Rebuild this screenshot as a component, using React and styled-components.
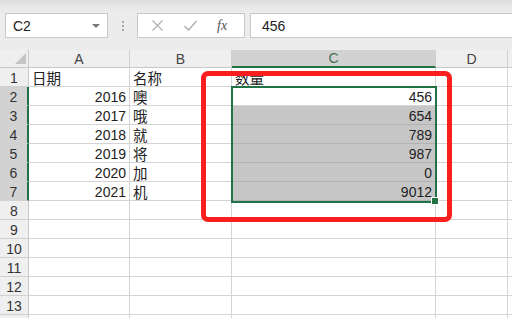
import styled, { createGlobalStyle } from 'styled-components';

const GlobalStyle = createGlobalStyle`
  html, body {
    margin: 0;
    padding: 0;
    background: #fff;
  }
  body {
    font-family: "Liberation Sans", "Noto Sans CJK SC", sans-serif;
    overflow: hidden;
  }
`;

const Page = styled.div`
  width: 512px;
  height: 318px;
  overflow: hidden;
  display: flex;
  flex-direction: column;
`;

const Toolbar = styled.div`
  height: 50px;
  flex-shrink: 0;
  box-sizing: border-box;
  padding: 13px 0 12px 5px;
  display: flex;
  background: linear-gradient(#dcdcdc 0px, #e9e9e9 8px, #ececec 14px);
`;

const NameBox = styled.div`
  width: 103px;
  box-sizing: border-box;
  background: #fff;
  border: 1px solid #c8c8c8;
  display: flex;
  align-items: center;
  justify-content: space-between;
  padding: 0 7px 0 7px;
  font-size: 14px;
  color: #222;
`;

const Arrow = styled.span`
  width: 0;
  height: 0;
  border-left: 4px solid transparent;
  border-right: 4px solid transparent;
  border-top: 4px solid #777;
`;

const Splitter = styled.div`
  width: 29px;
  display: flex;
  flex-direction: column;
  align-items: center;
  justify-content: center;
  gap: 2px;
  span {
    width: 2px;
    height: 2px;
    background: #a8a8a8;
  }
`;

const FxGroup = styled.div`
  width: 108px;
  box-sizing: border-box;
  background: #fff;
  border: 1px solid #c8c8c8;
  display: flex;
  align-items: center;
  padding-left: 13px;
  gap: 19px;
`;

const FxText = styled.span`
  font-family: "Liberation Serif", "DejaVu Serif", serif;
  font-style: italic;
  font-size: 14px;
  color: #555;
  margin-left: 0px;
`;

const FormulaInput = styled.div`
  flex: 1;
  margin-left: 5px;
  box-sizing: border-box;
  background: #fff;
  border: 1px solid #c8c8c8;
  border-right: none;
  display: flex;
  align-items: center;
  padding-left: 11px;
  font-size: 14px;
  color: #222;
`;

const Sheet = styled.div`
  position: relative;
  flex-shrink: 0;
  display: grid;
  grid-template-columns: 29px 101px 102px 204px 72px 40px;
  grid-template-rows: 18px repeat(14, 19px);
  font-size: 14px;
`;

const Corner = styled.div`
  background: #efefef;
  border-right: 1px solid #c8c8c8;
  border-bottom: 1px solid #c8c8c8;
  box-sizing: border-box;
  display: flex;
  align-items: flex-end;
  justify-content: flex-end;
  padding: 0 2px 3px 0;
`;

const ColHead = styled.div`
  box-sizing: border-box;
  background: ${(p) => (p.active ? '#d2d2d2' : '#efefef')};
  border-right: 1px solid #cfcfcf;
  border-bottom: ${(p) => (p.active ? '2px solid #217346' : '1px solid #c8c8c8')};
  color: ${(p) => (p.active ? '#3f6f54' : '#444')};
  display: flex;
  align-items: center;
  justify-content: center;
  font-size: 14px;
`;

const RowHead = styled.div`
  box-sizing: border-box;
  background: ${(p) => (p.active ? '#d2d2d2' : '#efefef')};
  border-bottom: 1px solid #d0d0d0;
  border-right: ${(p) => (p.active ? '2px solid #217346' : '1px solid #c8c8c8')};
  color: #333;
  display: flex;
  align-items: center;
  justify-content: center;
  padding-top: 1px;
`;

const Cell = styled.div`
  box-sizing: border-box;
  background: ${(p) => (p.selected ? '#c6c6c6' : '#fff')};
  border-right: 1px solid #d4d4d4;
  border-bottom: 1px solid ${(p) => (p.selected ? '#b2b2b2' : '#d4d4d4')};
  color: #222;
  display: flex;
  align-items: center;
  justify-content: ${(p) => (p.num ? 'flex-end' : 'flex-start')};
  padding: 1px 3px 0 3px;
  white-space: nowrap;
  overflow: hidden;
  font-family: ${(p) =>
    p.num ? '"Liberation Sans", sans-serif' : '"Noto Sans CJK SC", sans-serif'};
  font-size: ${(p) => (p.num ? '14px' : '14.5px')};
`;

const Selection = styled.div`
  position: absolute;
  left: 231px;
  top: 36px;
  width: 206px;
  height: 117px;
  box-sizing: border-box;
  border: 2px solid #217346;
  pointer-events: none;
`;

const Handle = styled.div`
  position: absolute;
  right: -4px;
  bottom: -4px;
  width: 6px;
  height: 6px;
  background: #217346;
  border: 1px solid #fff;
`;

const RedBox = styled.div`
  position: absolute;
  left: 201px;
  top: 21px;
  width: 251px;
  height: 151px;
  box-sizing: border-box;
  border: 5px solid #fa1e1e;
  border-radius: 7px;
  pointer-events: none;
`;

const rows = [
  ['日期', '名称', '数量'],
  [2016, '噢', 456],
  [2017, '哦', 654],
  [2018, '就', 789],
  [2019, '将', 987],
  [2020, '加', 0],
  [2021, '机', 9012],
];

const cols = ['A', 'B', 'C', 'D', ''];

export default function App() {
  const allRows = Array.from({ length: 14 }, (_, i) => rows[i] || ['', '', '']);
  return (
    <Page>
      <GlobalStyle />
      <Toolbar>
        <NameBox>
          C2
          <Arrow />
        </NameBox>
        <Splitter>
          <span />
          <span />
          <span />
        </Splitter>
        <FxGroup>
          <svg width="13" height="13" viewBox="0 0 13 13">
            <path d="M1.5 1.5 L11.5 11.5 M11.5 1.5 L1.5 11.5" stroke="#b4b4b4" strokeWidth="1.4" fill="none" />
          </svg>
          <svg width="15" height="13" viewBox="0 0 15 13">
            <path d="M1.5 7 L5.5 11 L13.5 2" stroke="#b4b4b4" strokeWidth="1.6" fill="none" />
          </svg>
          <FxText>fx</FxText>
        </FxGroup>
        <FormulaInput>456</FormulaInput>
      </Toolbar>
      <Sheet>
        <Corner>
          <svg width="11" height="11" viewBox="0 0 11 11">
            <polygon points="11,0 11,11 0,11" fill="#c4c4c4" />
          </svg>
        </Corner>
        {cols.map((c) => (
          <ColHead key={c || 'E'} active={c === 'C'}>
            {c}
          </ColHead>
        ))}
        {allRows.map((r, i) => {
          const active = i >= 1 && i <= 6;
          return [
            <RowHead key={`h${i}`} active={active}>
              {i + 1}
            </RowHead>,
            <Cell key={`a${i}`} num={typeof r[0] === 'number'}>
              {r[0]}
            </Cell>,
            <Cell key={`b${i}`}>{r[1]}</Cell>,
            <Cell key={`c${i}`} num={typeof r[2] === 'number'} selected={i >= 2 && i <= 6}>
              {r[2]}
            </Cell>,
            <Cell key={`d${i}`} />,
            <Cell key={`e${i}`} />,
          ];
        })}
        <Selection>
          <Handle />
        </Selection>
        <RedBox />
      </Sheet>
    </Page>
  );
}
